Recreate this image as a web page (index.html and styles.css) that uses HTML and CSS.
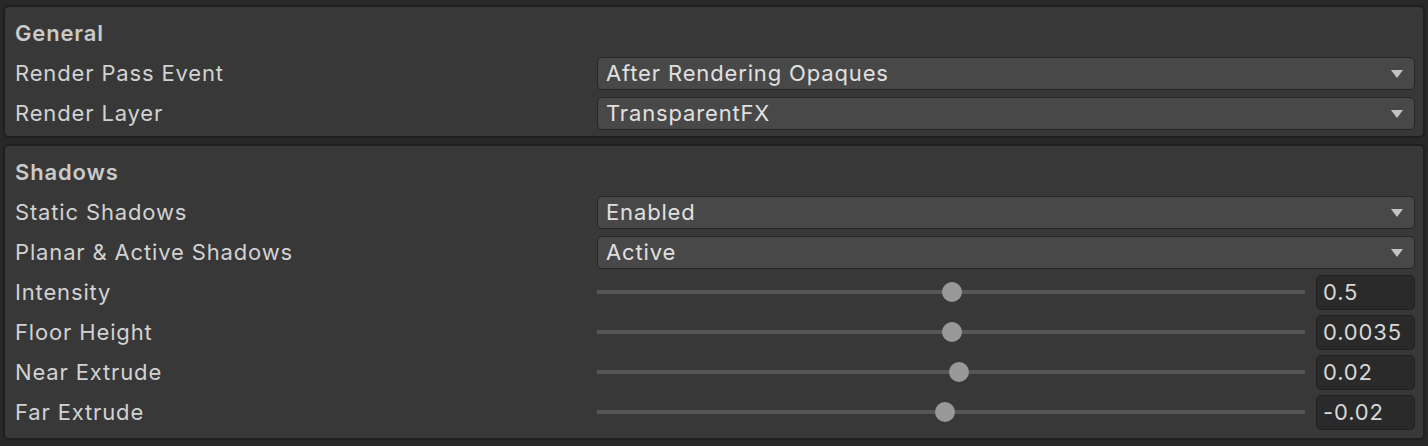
FILE: index.html
```html
<!DOCTYPE html>
<html>
<head>
<meta charset="utf-8">
<link rel="stylesheet" href="styles.css">
</head>
<body>
<div class="inspector">
  <section class="panel panel-general">
    <div class="row header">General</div>
    <div class="row">
      <span class="label">Render Pass Event</span>
      <div class="dropdown"><span>After Rendering Opaques</span><i class="arrow"></i></div>
    </div>
    <div class="row">
      <span class="label">Render Layer</span>
      <div class="dropdown"><span>TransparentFX</span><i class="arrow"></i></div>
    </div>
  </section>
  <section class="panel panel-shadows">
    <div class="row header">Shadows</div>
    <div class="row">
      <span class="label">Static Shadows</span>
      <div class="dropdown"><span>Enabled</span><i class="arrow"></i></div>
    </div>
    <div class="row">
      <span class="label">Planar &amp; Active Shadows</span>
      <div class="dropdown"><span>Active</span><i class="arrow"></i></div>
    </div>
    <div class="row">
      <span class="label">Intensity</span>
      <div class="slider-field">
        <div class="slider"><div class="track"></div><div class="thumb" style="left: 355px"></div></div>
        <div class="number">0.5</div>
      </div>
    </div>
    <div class="row">
      <span class="label">Floor Height</span>
      <div class="slider-field">
        <div class="slider"><div class="track"></div><div class="thumb" style="left: 355px"></div></div>
        <div class="number">0.0035</div>
      </div>
    </div>
    <div class="row">
      <span class="label">Near Extrude</span>
      <div class="slider-field">
        <div class="slider"><div class="track"></div><div class="thumb" style="left: 362px"></div></div>
        <div class="number">0.02</div>
      </div>
    </div>
    <div class="row">
      <span class="label">Far Extrude</span>
      <div class="slider-field">
        <div class="slider"><div class="track"></div><div class="thumb" style="left: 348px"></div></div>
        <div class="number">-0.02</div>
      </div>
    </div>
  </section>
</div>
</body>
</html>
```
FILE: styles.css
```css
html, body {
  margin: 0;
  padding: 0;
  background: #282828;
}
body {
  font-family: Inter, "Noto Sans", sans-serif;
  font-size: 22px;
  letter-spacing: 0.85px;
  color: #d2d2d2;
}
.inspector {
  display: flex;
  flex-direction: column;
  gap: 6px;
  padding: 5px 3px 0 3px;
}
.panel {
  background: #383838;
  border: 2px solid #1f1f1f;
  border-radius: 6px;
  padding: 6px 8px 3px 10px;
}
.panel-shadows {
  padding-bottom: 6px;
}
.row {
  display: grid;
  grid-template-columns: 582px 1fr;
  align-items: center;
  height: 40px;
}
.row.header {
  display: flex;
  font-weight: 600;
  color: #cacaca;
}
.label {
  white-space: nowrap;
}
.dropdown {
  height: 33px;
  box-sizing: border-box;
  background: #484848;
  border: 1px solid #252525;
  border-radius: 5px;
  display: flex;
  align-items: center;
  justify-content: space-between;
  padding: 0 11px 0 8px;
  color: #e0e0e0;
}
.arrow {
  width: 0;
  height: 0;
  border-left: 6px solid transparent;
  border-right: 6px solid transparent;
  border-top: 8px solid #c4c4c4;
  margin-top: 2px;
}
.slider-field {
  display: flex;
  align-items: center;
  gap: 11px;
}
.slider {
  position: relative;
  flex: 1;
  height: 22px;
}
.track {
  position: absolute;
  left: 0;
  right: 0;
  top: 9px;
  height: 4px;
  background: #565656;
}
.thumb {
  position: absolute;
  top: 1px;
  width: 20px;
  height: 20px;
  margin-left: -10px;
  border-radius: 50%;
  background: #999999;
}
.number {
  width: 99px;
  height: 35px;
  box-sizing: border-box;
  background: #2a2a2a;
  border: 1px solid #202020;
  border-radius: 5px;
  padding: 0 6px;
  display: flex;
  align-items: center;
  color: #d8d8d8;
}
```
